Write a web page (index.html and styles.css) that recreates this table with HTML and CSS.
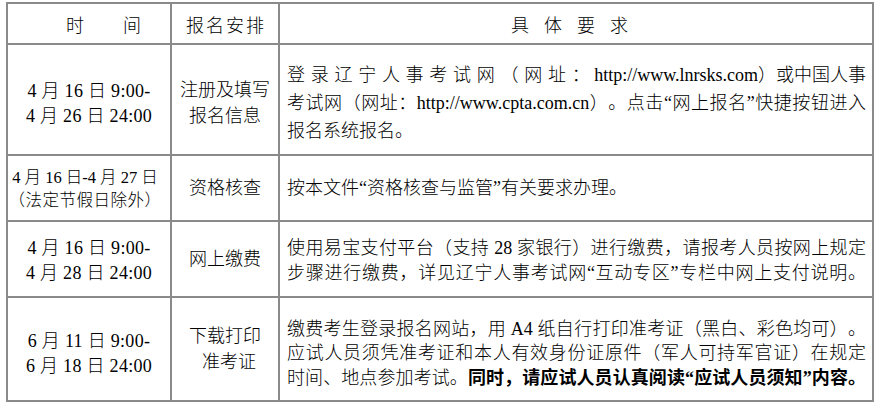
FILE: index.html
```html
<!DOCTYPE html>
<html lang="zh-CN">
<head>
<meta charset="utf-8">
<title>报名安排</title>
<link rel="stylesheet" href="styles.css">
</head>
<body>
<div class="wrap">
<table class="sched">
  <colgroup>
    <col class="c1"><col class="c2"><col class="c3">
  </colgroup>
  <tr class="head">
    <th class="h-time">时<span class="gap"></span>间</th>
    <th class="h-arr">报名安排</th>
    <th class="h-req">具体要求</th>
  </tr>
  <tr class="r1">
    <td class="time">4 月 16 日 9:00-<br>4 月 26 日 24:00</td>
    <td class="arr">注册及填写<br>报名信息</td>
    <td class="req">
      <span class="split"><span class="spread">登录辽宁人事考试网（网址：</span><span class="rest">&nbsp;http://www.lnrsks.com）或中国人事</span></span>
      <span class="jl">考试网（网址：http://www.cpta.com.cn）。点击“网上报名”快捷按钮进入</span>
      <span class="ll">报名系统报名。</span>
    </td>
  </tr>
  <tr class="r2">
    <td class="time tight"><span class="mid">4 月 16 日-4 月 27 日</span><br><span class="small">（法定节假日除外）</span></td>
    <td class="arr">资格核查</td>
    <td class="req"><span class="ll">按本文件“资格核查与监管”有关要求办理。</span></td>
  </tr>
  <tr class="r3">
    <td class="time">4 月 16 日 9:00-<br>4 月 28 日 24:00</td>
    <td class="arr">网上缴费</td>
    <td class="req">
      <span class="jl">使用易宝支付平台（支持 28 家银行）进行缴费，请报考人员按网上规定</span>
      <span class="jl">步骤进行缴费，详见辽宁人事考试网“互动专区”专栏中网上支付说明。</span>
    </td>
  </tr>
  <tr class="r4">
    <td class="time">6 月 11 日 9:00-<br>6 月 18 日 24:00</td>
    <td class="arr">下载打印<br><span class="indent">准考证</span></td>
    <td class="req">
      <span class="jl">缴费考生登录报名网站，用 A4 纸自行打印准考证（黑白、彩色均可）。</span>
      <span class="jl">应试人员须凭准考证和本人有效身份证原件（军人可持军官证）在规定</span>
      <span class="jl">时间、地点参加考试。<b>同时，请应试人员认真阅读“应试人员须知”内容。</b></span>
    </td>
  </tr>
</table>
</div>
</body>
</html>
```

FILE: styles.css
```css
html, body {
  margin: 0;
  padding: 0;
  background: #ffffff;
}

body {
  font-family: "Liberation Serif", "Noto Sans CJK SC", serif;
  font-weight: 300;
  color: #000000;
  font-size: 18px;
  text-spacing-trim: space-all;
}

.wrap {
  padding: 2px 0 0 6px;
}

.sched {
  border-collapse: collapse;
  table-layout: fixed;
  width: 866px;
}

.c1 { width: 164px; }
.c2 { width: 108px; }
.c3 { width: 594px; }

.sched th,
.sched td {
  border: 2px solid #8a8a8a;
  padding: 0;
  vertical-align: middle;
}

.head { height: 41px; }
.r1 { height: 111px; }
.r2 { height: 66px; }
.r3 { height: 76px; }
.r4 { height: 104px; }

.sched th {
  font-weight: 300;
  font-size: 18px;
}

.h-time {
  text-align: left;
  padding-left: 58px !important;
}

.gap {
  display: inline-block;
  width: 39px;
}

.h-arr {
  letter-spacing: 2px;
  text-align: center;
  padding-left: 2px !important;
}

.h-req {
  letter-spacing: 15px;
  text-align: center;
  padding-left: 2px !important;
}

.time {
  text-align: center;
  line-height: 25px;
  font-size: 18px;
  letter-spacing: 0.3px;
}

.r1 .time { padding-top: 8px !important; }
.r3 .time { padding-top: 3px !important; }
.r4 .time { padding-top: 9px !important; }

.time.tight {
  line-height: 22px;
  letter-spacing: 0;
  padding-right: 8px !important;
  padding-top: 2px !important;
}

.mid {
  font-size: 16.5px;
}

.small {
  font-size: 16.5px;
  letter-spacing: 0.5px;
}

.arr {
  text-align: center;
  line-height: 26px;
}

.r1 .arr { padding-top: 6px !important; }

.indent {
  padding-left: 8px;
}

.req {
  padding: 0 6px 0 7px !important;
  line-height: 28px;
}

.r1 .req { padding-top: 7px !important; }
.r3 .req { padding-top: 3px !important; line-height: 25px; }
.r4 .req { padding-top: 9px !important; line-height: 24.5px; }

.jl {
  display: block;
  text-align: justify;
  text-align-last: justify;
  white-space: nowrap;
}

.ll {
  display: block;
  text-align: left;
  white-space: nowrap;
}

.split {
  display: flex;
  white-space: nowrap;
}

.spread {
  flex: 1;
  text-align: justify;
  text-align-last: justify;
}

.rest {
  flex: none;
}

.req b {
  font-weight: 700;
}
```
